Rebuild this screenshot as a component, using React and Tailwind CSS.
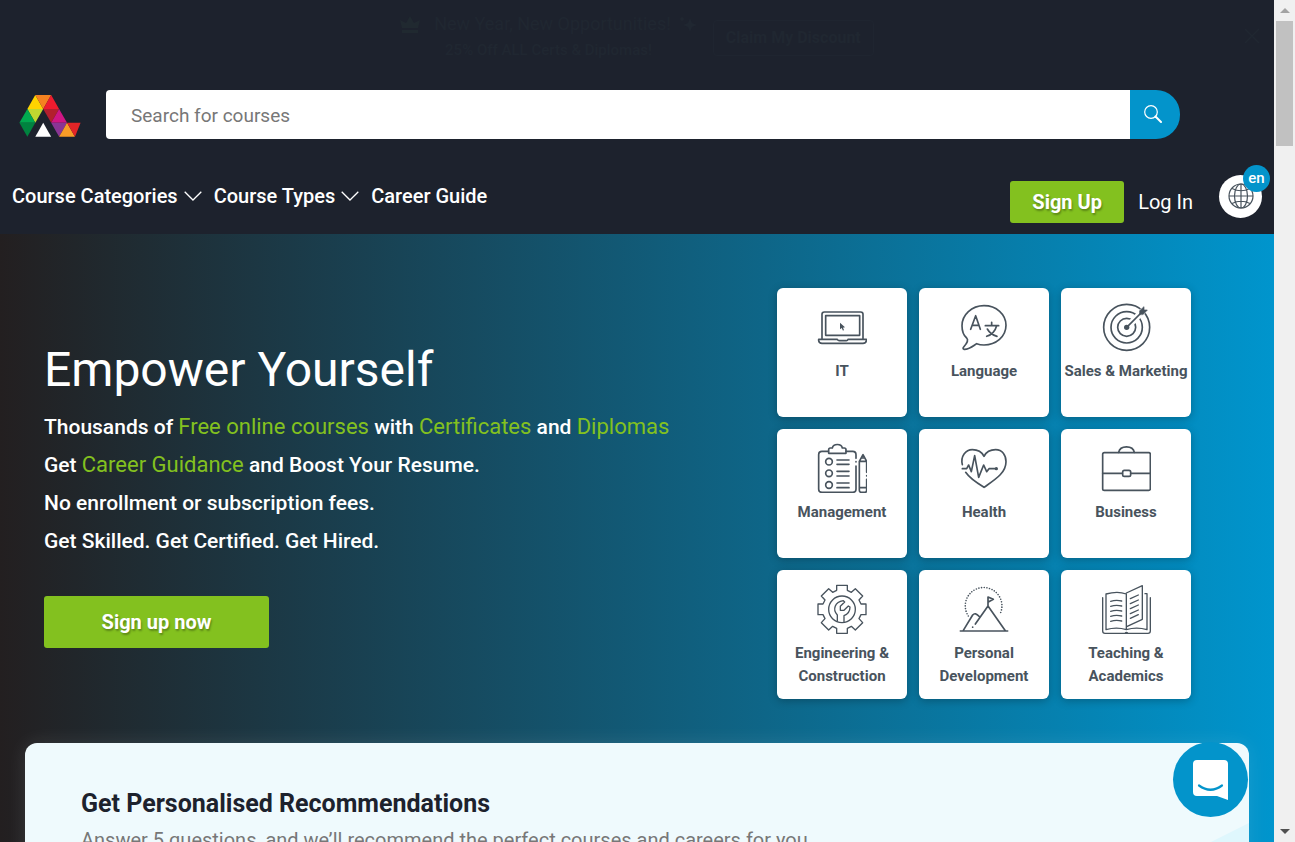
import React from "react";

function Icon({ box, children }) {
  return (
    <svg viewBox={box} className="size-[50px] shrink-0" fill="none" stroke="#48535d" strokeWidth="5" strokeLinejoin="round" strokeLinecap="round" aria-hidden="true">
      {children}
    </svg>
  );
}

const LaptopIcon = () => (
  <Icon box="138 66 150 150">
    <path d="M153 176V103Q153 96 160 96H269Q276 96 276 103V176" />
    <rect x="164" y="107" width="102" height="59" />
    <path d="M143 178H199Q201 182 205 182H226Q230 182 231 178H286V182Q285 190 276 190H153Q144 190 143 182Z" />
    <path d="M207 128V148L212 144L216 152L219 150L216 143L222 142Z" fill="#48535d" stroke="none" />
  </Icon>
);

const LanguageIcon = () => (
  <Icon box="567 66 150 150">
    <path d="M620 191C608 199 597 209 582 208Q577 206 581 201C591 190 596 180 590 174C576 162 576 148 576 137C576 104 605 77 642 77C679 77 708 103 708 136C708 170 678 195 642 195Q630 195 620 191Z" />
    <path d="M602 148L617 107L631 148M607 136H627M646 137H686M665 127V137M680 137C676 152 665 164 650 169M652 147C658 158 668 165 681 169" />
  </Icon>
);

const TargetIcon = () => (
  <Icon box="993 66 150 150">
    <circle cx="1070" cy="142" r="69" />
    <circle cx="1070" cy="142" r="47" />
    <circle cx="1070" cy="142" r="27" />
    <path d="M1084 128L1127 85" stroke="white" strokeWidth="19" strokeLinecap="butt" />
    <circle cx="1070" cy="142" r="8" fill="#48535d" stroke="none" />
    <path d="M1070 142L1116 96" />
    <path d="M1109 103V92L1122 80V90H1132L1120 103Z" fill="#48535d" strokeWidth="2" />
  </Icon>
);

const ClipboardIcon = () => (
  <Icon box="138 54 150 150">
    <path d="M172 79H153Q143 79 143 89V192Q143 202 153 202H245Q255 202 255 192V123M255 111V110M255 100V89Q255 79 245 79H225" />
    <path d="M173 85V74Q173 69 178 69H184C187 55 211 55 214 69H220Q225 69 225 74V85Z" />
    <circle cx="174" cy="110" r="10" />
    <circle cx="174" cy="145" r="10" />
    <circle cx="174" cy="180" r="10" />
    <path d="M198 105H234M198 118H234M198 139H234M198 153H234M198 174H234M198 188H234" />
    <path d="M287 142V109L276 89L265 109V196Q265 202 271 202H281Q287 202 287 196V163M287 152V153M265 109H287M265 188H287M272 99H280" />
  </Icon>
);

const HealthIcon = () => (
  <Icon box="567 54 150 150">
    <path d="M577 119C571 94 587 74 607 74C624 74 636 82 642 94C648 82 660 74 677 74C697 74 708 90 708 110C708 145 673 165 642 187C619 173 599 160 587 142" />
    <path d="M577 131H590L596 120L604 140L614 92L626 157L641 120L650 140L657 131H675" />
    <circle cx="679" cy="131" r="5" fill="#48535d" stroke="none" />
  </Icon>
);

const BriefcaseIcon = () => (
  <Icon box="993 54 150 150">
    <rect x="998" y="83" width="143" height="113" rx="5" />
    <path d="M1046 82C1050 60 1089 60 1093 82M998 145H1057M1082 145H1141" />
    <rect x="1058" y="136" width="24" height="18" rx="5" />
  </Icon>
);

const GearIcon = () => (
  <Icon box="139 57 150 150">
    <g transform="translate(214 133)" strokeWidth="4">
      <path d="M-16-57V-72H16V-57L28-51L40-62L62-40L51-28L57-16H72V16H57L51 28L62 40L40 62L28 51L16 57V72H-16V57L-28 51L-40 62L-62 40L-51 28L-57 16H-72V-16H-57L-51-28L-62-40L-40-62L-28-51Z" />
      <circle r="40" />
      <path d="M-14 35V17C-29 1-22-22 4-26L8-22L-5-9V3H6L19-10L24-7C24 6 16 15 6 19V38" />
    </g>
  </Icon>
);

const MountainIcon = () => (
  <Icon box="567 57 150 150">
    <path d="M571 198H713M580 196L608 150Q616 141 627 154M616 177L654 123L706 197M654 122V96L670 103L655 111" />
    <path d="M595 153A55 55 0 1 1 689 149" strokeDasharray="0 8" strokeWidth="5" />
    <path d="M608 186V186.5" />
  </Icon>
);

const BookIcon = () => (
  <Icon box="993 57 150 150">
    <g strokeWidth="4">
      <path d="M1008 194V87Q1043 77 1069 87V194Q1040 185 1008 194ZM1069 84L1117 62V163L1070 185M1125 86H1131V194Q1100 185 1069 194" />
      <path d="M998 98V198Q998 205 1005 205H1134Q1141 205 1141 198V98M1065 205Q1069 199 1074 205" />
      <path d="M1022 109Q1038 104 1055 108M1022 124Q1038 119 1055 123M1022 139Q1038 134 1055 138M1022 154Q1038 149 1055 153M1022 169Q1038 164 1055 168M1081 101L1105 90M1081 116L1105 105M1081 131L1105 120M1081 146L1105 135M1081 160L1105 149" />
    </g>
  </Icon>
);

const categories = [
  { label: "IT", Glyph: LaptopIcon },
  { label: "Language", Glyph: LanguageIcon },
  { label: "Sales & Marketing", Glyph: TargetIcon },
  { label: "Management", Glyph: ClipboardIcon },
  { label: "Health", Glyph: HealthIcon },
  { label: "Business", Glyph: BriefcaseIcon },
  { label: "Engineering & Construction", Glyph: GearIcon },
  { label: "Personal Development", Glyph: MountainIcon },
  { label: "Teaching & Academics", Glyph: BookIcon },
];

function Logo() {
  return (
    <svg viewBox="57 45 187 127" className="h-[42px] w-[62px]" role="img" aria-label="Home">
      <path fill="#ffd400" d="M106 45L130 87H82Z" />
      <path fill="#f58220" d="M106 45H154L130 87Z" />
      <path fill="#ed1c2e" d="M154 45L178 87H130Z" />
      <path fill="#bfd730" d="M82 87H130L106 129Z" />
      <path fill="#00a94f" d="M82 87L106 129H58Z" />
      <path fill="#00833f" d="M58 129H106L82 171Z" />
      <path fill="#b31f2e" d="M130 87H178L154 129Z" />
      <path fill="#cf1684" d="M178 87L202 129H154Z" />
      <path fill="#8a3594" d="M154 129H202L178 171Z" />
      <path fill="#f99d27" d="M202 129L226 171H178Z" />
      <path fill="#e42527" d="M202 129H243L226 171Z" />
      <path fill="white" d="M130 129L154 171H106Z" />
    </svg>
  );
}

function Chevron() {
  return (
    <svg viewBox="0 0 18 10" className="h-[10px] w-[18px]" fill="none" stroke="white" strokeWidth="1.3" aria-hidden="true">
      <path d="M.7.7L9 9L17.3.7" />
    </svg>
  );
}

function Banner() {
  return (
    <div className="flex h-[74px] items-start text-[#202731]">
      <div className="flex flex-1 justify-center gap-4 pl-[30px]">
        <div className="flex flex-col items-center pt-3">
          <p className="flex items-center text-lg leading-6">
            <svg viewBox="0 0 20 18" className="mr-3.5 h-[18px] w-5" fill="#202930" aria-hidden="true">
              <path d="M2 13L0 5L6 8L10 1L14 8L20 5L18 13ZM2 15H18V18H2Z" />
            </svg>
            New Year, New Opportunities!
            <svg viewBox="0 0 18 16" className="ml-2 h-4 w-[18px]" fill="currentColor" aria-hidden="true">
              <path d="M11 2L13 7L18 9L13 11L11 16L9 11L4 9L9 7ZM3 0L4 2L6 3L4 4L3 6L2 4L0 3L2 2Z" />
            </svg>
          </p>
          <p className="pt-0.5 text-[15px] leading-6 font-medium">25% Off ALL Certs &amp; Diplomas!</p>
        </div>
        <button className="mt-5 h-9 rounded-sm border border-[#1f2530] px-3 text-base font-bold">Claim My Discount</button>
      </div>
      <button className="mt-7 mr-[14px] size-4" aria-label="Close">
        <svg viewBox="0 0 16 16" stroke="currentColor" strokeWidth="1.5"><path d="M1 1L15 15M15 1L1 15" /></svg>
      </button>
    </div>
  );
}

function Header() {
  return (
    <header className="bg-[#1d222d] text-white">
      <Banner />
      <div className="flex items-center gap-[25px] pt-4 pr-[94px] pl-[19px]">
        <a href="#home" className="pt-0.5"><Logo /></a>
        <form className="flex h-[49px] flex-1" onSubmit={(e) => e.preventDefault()}>
          <input type="search" aria-label="Search for courses" placeholder="Search for courses" className="min-w-0 flex-1 rounded-l bg-white px-[25px] pt-[3px] text-[19px] text-[#333] placeholder:text-[#777] outline-none" />
          <button className="flex w-[50px] items-center justify-center rounded-r-3xl bg-[#0394cb] pr-1 pb-0.5" aria-label="Search">
            <svg viewBox="0 0 18 18" className="size-[18px]" fill="none" stroke="white" aria-hidden="true">
              <circle cx="7" cy="7" r="6.3" strokeWidth="1.2" />
              <path d="M11.5 11.5L17 17" strokeWidth="2" strokeLinecap="round" />
            </svg>
          </button>
        </form>
      </div>
      <div className="flex h-[95px] items-center justify-between pr-3 pl-3">
        <nav className="flex items-center gap-3 pt-[18px] text-xl leading-7 font-medium">
          <button className="flex items-center gap-1.5">Course Categories <Chevron /></button>
          <button className="flex items-center gap-1.5">Course Types <Chevron /></button>
          <a href="#career-guide">Career Guide</a>
        </nav>
        <div className="flex items-center pt-[30px] text-xl">
          <a href="#sign-up" className="flex h-[42px] w-[114px] items-center justify-center rounded-[3px] bg-[#83c11f] font-bold [text-shadow:1px_2px_2px_rgba(0,0,0,0.3)]">Sign Up</a>
          <a href="#log-in" className="ml-3.5">Log In</a>
          <button className="relative -mt-[11px] ml-[26px] flex size-[43px] items-center justify-center rounded-full bg-white" aria-label="Language: en">
            <svg viewBox="0 0 26 26" className="size-[26px]" fill="none" stroke="#48535d" strokeWidth="1.2" aria-hidden="true">
              <circle cx="13" cy="13" r="12" />
              <ellipse cx="13" cy="13" rx="6.5" ry="12" />
              <path d="M13 1V25M1 13H25M4 5.5Q13 10 22 5.5M4 20.5Q13 16 22 20.5" />
            </svg>
            <span className="absolute -top-2.5 -right-2 flex size-[27px] items-center justify-center rounded-full bg-[#0394cb] text-[15px] font-medium">en</span>
          </button>
        </div>
      </div>
    </header>
  );
}

function Hero() {
  return (
    <section className="flex items-start justify-between pt-[54px] pr-[83px] pl-11">
      <div className="pt-[50px] text-white">
        <h1 className="text-5xl leading-[64px]">Empower Yourself</h1>
        <div className="pt-1.5 text-[21px] leading-[38px] font-medium [&_a]:text-[22px] [&_a]:font-normal [&_a]:text-[#83c11f]">
          <p>Thousands of <a href="#courses">Free online courses</a> with <a href="#certificates">Certificates</a> and <a href="#diplomas">Diplomas</a></p>
          <p>Get <a href="#guidance">Career Guidance</a> and Boost Your Resume.</p>
          <p>No enrollment or subscription fees.</p>
          <p>Get Skilled. Get Certified. Get Hired.</p>
        </div>
        <a href="#sign-up" className="mt-9 flex h-[52px] w-[225px] items-center justify-center rounded-[3px] bg-[#83c11f] text-xl font-bold [text-shadow:1px_2px_2px_rgba(0,0,0,0.3)]">Sign up now</a>
      </div>
      <ul className="grid grid-cols-[repeat(3,130px)] gap-x-3 gap-y-3">
        {categories.map(({ label, Glyph }) => (
          <li key={label}>
            <a href="#category" className="flex h-[129px] flex-col items-center rounded-md bg-white pt-3.5 shadow-[0_2px_8px_rgba(0,0,0,0.25)]">
              <Glyph />
              <span className="w-full pt-2 text-center text-[15px] leading-[23px] font-bold text-[#48535d]">{label}</span>
            </a>
          </li>
        ))}
      </ul>
    </section>
  );
}

function Recommendations() {
  return (
    <section className="relative mx-[25px] mt-11 h-[300px] overflow-hidden rounded-xl bg-[#effafd] px-14 pt-[45px] shadow-[0_0_20px_rgba(255,255,255,0.1)]">
      <svg viewBox="0 0 100 50" className="absolute top-[80px] right-0 w-[100px]" aria-hidden="true"><path d="M100 0L0 50H100Z" fill="#dff7fd" /></svg>
      <h2 className="text-[25px] leading-8 font-bold text-[#1d222d]">Get Personalised Recommendations</h2>
      <p className="pt-1.5 text-xl leading-7 text-[#777]">Answer 5 questions, and we’ll recommend the perfect courses and careers for you.</p>
    </section>
  );
}

function ScrollRail() {
  return (
    <div className="flex w-[21px] shrink-0 flex-col items-center justify-between bg-[#f0f0f0]" aria-hidden="true">
      <div className="flex w-full flex-col items-center">
        <div className="flex h-[21px] items-center"><svg viewBox="0 0 10 5" className="w-[10px]"><path d="M5 0L10 5H0Z" fill="#a3a3a3" /></svg></div>
        <div className="h-[125px] w-[17px] bg-[#c1c1c1]" />
      </div>
      <div className="flex h-[21px] items-center"><svg viewBox="0 0 10 5" className="w-[10px]"><path d="M0 0H10L5 5Z" fill="#505050" /></svg></div>
    </div>
  );
}

export default function App() {
  return (
    <div className="flex h-screen overflow-hidden font-['Roboto',sans-serif]">
      <div className="relative min-w-0 flex-1 overflow-hidden">
        <Header />
        <main className="bg-linear-to-r/srgb from-[#231f20] to-[#0095cd]">
          <Hero />
          <Recommendations />
        </main>
        <button className="absolute right-[26px] bottom-[25px] flex size-[75px] items-center justify-center rounded-full bg-[#0394cb]" aria-label="Open chat">
          <svg viewBox="0 0 35 40" className="h-10 w-[35px]" aria-hidden="true">
            <path d="M4 0H31Q35 0 35 4V40L24 36H4Q0 36 0 32V4Q0 0 4 0Z" fill="white" />
            <path d="M6 25.500Q17.500 34 29 25.500" fill="none" stroke="#0394cb" strokeWidth="2.200" strokeLinecap="round" />
          </svg>
        </button>
      </div>
      <ScrollRail />
    </div>
  );
}
